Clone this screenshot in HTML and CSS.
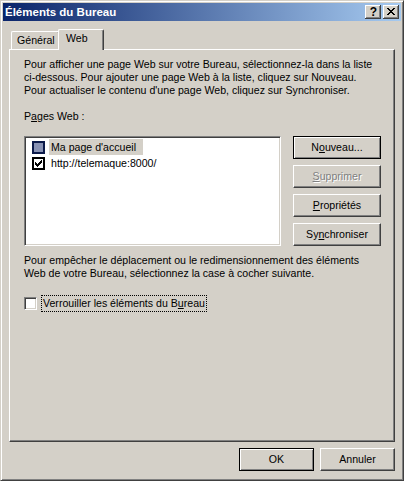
FILE: index.html
```html
<!DOCTYPE html>
<html lang="fr">
<head>
<meta charset="utf-8">
<title>Éléments du Bureau</title>
<link rel="stylesheet" href="styles.css">
</head>
<body>
<div class="window">
  <div class="titlebar">
    <span class="title">Éléments du Bureau</span>
    <div class="caption-buttons">
      <span class="cbtn help">?</span>
      <span class="cbtn close">
        <svg width="16" height="14" viewBox="0 0 16 14" shape-rendering="crispEdges">
          <rect x="4" y="3" width="2" height="1"/><rect x="10" y="3" width="2" height="1"/>
          <rect x="5" y="4" width="2" height="1"/><rect x="9" y="4" width="2" height="1"/>
          <rect x="6" y="5" width="4" height="1"/>
          <rect x="7" y="6" width="2" height="1"/>
          <rect x="6" y="7" width="4" height="1"/>
          <rect x="5" y="8" width="2" height="1"/><rect x="9" y="8" width="2" height="1"/>
          <rect x="4" y="9" width="2" height="1"/><rect x="10" y="9" width="2" height="1"/>
        </svg>
      </span>
    </div>
  </div>
  <div class="client">
    <div class="tabs">
      <div class="tab">Général</div>
      <div class="tab active">Web</div>
    </div>
    <div class="panel">
      <p class="text">Pour afficher une page Web sur votre Bureau, sélectionnez-la dans la liste<br>ci-dessous. Pour ajouter une page Web à la liste, cliquez sur Nouveau.<br>Pour actualiser le contenu d'une page Web, cliquez sur Synchroniser.</p>
      <div class="label">P<u>a</u>ges Web :</div>
      <div class="list-row">
        <div class="listbox">
          <div class="item">
            <svg class="state" width="13" height="13" viewBox="0 0 13 13" shape-rendering="crispEdges">
              <rect x="0" y="0" width="13" height="13" fill="#0b1a4a"/>
              <rect x="2" y="2" width="9" height="9" fill="#8892b4"/>
            </svg>
            <span class="item-text selected">Ma page d'accueil</span>
          </div>
          <div class="item">
            <svg class="state" width="13" height="13" viewBox="0 0 13 13" shape-rendering="crispEdges">
              <rect x="0" y="0" width="13" height="13" fill="#000"/>
              <rect x="2" y="2" width="9" height="9" fill="#fff"/>
              <rect x="3" y="5" width="1" height="3"/>
              <rect x="4" y="6" width="1" height="3"/>
              <rect x="5" y="7" width="1" height="3"/>
              <rect x="6" y="6" width="1" height="3"/>
              <rect x="7" y="5" width="1" height="3"/>
              <rect x="8" y="4" width="1" height="3"/>
              <rect x="9" y="3" width="1" height="3"/>
            </svg>
            <span class="item-text">http://telemaque:8000/</span>
          </div>
        </div>
        <div class="side-buttons">
          <button class="btn default">N<u>o</u>uveau...</button>
          <button class="btn" disabled><u>S</u>upprimer</button>
          <button class="btn"><u>P</u>ropriétés</button>
          <button class="btn">Sy<u>n</u>chroniser</button>
        </div>
      </div>
      <p class="text lower">Pour empêcher le déplacement ou le redimensionnement des éléments<br>Web de votre Bureau, sélectionnez la case à cocher suivante.</p>
      <div class="check-row">
        <span class="checkbox"></span>
        <span class="check-label">Verrouiller les éléments du B<u>u</u>reau</span>
      </div>
    </div>
    <div class="footer">
      <button class="btn default wide">OK</button>
      <button class="btn wide">Annuler</button>
    </div>
  </div>
</div>
</body>
</html>
```

FILE: styles.css
```css
* { box-sizing: border-box; }
html, body { margin: 0; padding: 0; }
body {
  background: #d4d0c8;
  font-family: "Liberation Sans", Arial, sans-serif;
  font-size: 10.6px;
  line-height: 13px;
  color: #000;
}
.window {
  width: 404px;
  height: 481px;
  background: #d4d0c8;
  border: 1px solid;
  border-color: #d4d0c8 #404040 #404040 #d4d0c8;
  box-shadow: inset 1px 1px #fff, inset -1px -1px #808080;
  padding: 2px;
  display: flex;
  flex-direction: column;
}
.titlebar {
  flex: none;
  height: 18px;
  background: linear-gradient(to right, #0a246a, #a6caf0);
  display: flex;
  align-items: center;
  justify-content: space-between;
}
.title {
  color: #fff;
  font-weight: bold;
  font-size: 11.5px;
  line-height: 18px;
  padding-left: 2px;
  white-space: nowrap;
}
.caption-buttons { display: flex; gap: 2px; padding-right: 2px; }
.cbtn {
  width: 16px;
  height: 14px;
  background: #d4d0c8;
  box-shadow: inset -1px -1px #404040, inset 1px 1px #fff, inset -2px -2px #808080;
  display: flex;
  align-items: center;
  justify-content: center;
}
.cbtn svg { display: block; fill: #000; }
.help {
  font-weight: bold;
  font-size: 12px;
  line-height: 14px;
  padding-left: 1px;
}
.client {
  flex: 1;
  padding: 8px 6px 0 6px;
  display: flex;
  flex-direction: column;
}
.tabs {
  display: flex;
  align-items: flex-end;
  height: 20px;
  padding-left: 2px;
}
.tab {
  width: 49px;
  height: 18px;
  padding: 2px 0 0 5px;
  border: 1px solid;
  border-color: #fff #404040 transparent #fff;
  border-bottom: none;
  border-radius: 2px 2px 0 0;
  box-shadow: inset -1px 0 #808080;
  background: #d4d0c8;
  white-space: nowrap;
}
.tab.active {
  width: 46px;
  height: 21px;
  margin-left: -2px;
  margin-bottom: -1px;
  padding-left: 7px;
  position: relative;
  z-index: 1;
}
.panel {
  flex: none;
  height: 393px;
  border: 1px solid;
  border-color: #fff #404040 #404040 #fff;
  box-shadow: inset -1px -1px #808080;
  padding: 8px 0 0 14px;
}
.text { margin: 0; white-space: nowrap; }
.label { margin-top: 13px; }
.list-row {
  margin-top: 13px;
  display: flex;
  gap: 12px;
  height: 110px;
}
.listbox {
  width: 257px;
  height: 110px;
  background: #fff;
  border: 1px solid;
  border-color: #808080 #fff #fff #808080;
  box-shadow: inset 1px 1px #404040, inset -1px -1px #d4d0c8;
  padding: 2px 0 0 7px;
}
.item {
  display: flex;
  align-items: center;
  height: 16px;
}
.state { display: block; flex: none; }
.item-text {
  margin-left: 4px;
  padding: 0 2px;
  line-height: 16px;
  white-space: nowrap;
}
.item-text.selected { background: #d4d0c8; padding-right: 7px; }
.side-buttons {
  display: flex;
  flex-direction: column;
  gap: 6px;
  width: 88px;
}
.btn {
  display: block;
  width: 88px;
  height: 23px;
  padding: 0;
  margin: 0;
  font: inherit;
  line-height: 13px;
  color: #000;
  background: #d4d0c8;
  border: 1px solid;
  border-color: #fff #404040 #404040 #fff;
  box-shadow: inset -1px -1px #808080;
  border-radius: 0;
  text-align: center;
}
.btn.default {
  border-color: #000;
  box-shadow: inset 1px 1px #fff, inset -1px -1px #808080;
}
.btn:disabled {
  color: #808080;
  text-shadow: 1px 1px 0 #fff;
}
.btn.wide { width: 75px; }
.lower { margin-top: 8px; }
.check-row {
  margin-top: 15px;
  display: flex;
  align-items: center;
  height: 17px;
}
.checkbox {
  flex: none;
  width: 13px;
  height: 13px;
  background: #fff;
  border: 1px solid;
  border-color: #808080 #fff #fff #808080;
  box-shadow: inset 1px 1px #404040, inset -1px -1px #d4d0c8;
}
.check-label {
  margin-left: 4px;
  border: 1px dotted #000;
  padding: 1px 1px 1px 1px;
  line-height: 13px;
  white-space: nowrap;
}
.footer {
  display: flex;
  justify-content: flex-end;
  gap: 6px;
  margin-top: 6px;
}
```
